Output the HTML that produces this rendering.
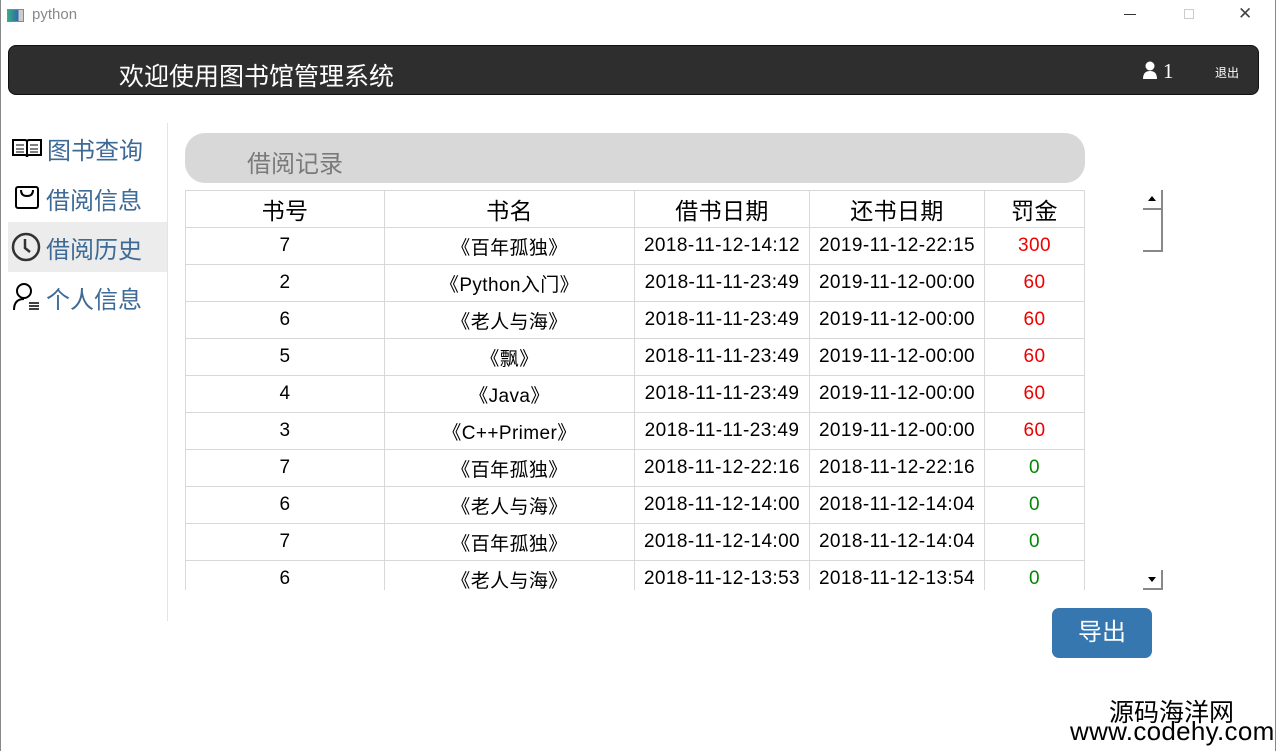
<!DOCTYPE html><html><head><meta charset="utf-8"><style>
*{margin:0;padding:0;box-sizing:border-box}
body{width:1276px;height:751px;background:#fff;position:relative;overflow:hidden;font-family:"Liberation Sans","Noto Sans CJK SC",sans-serif}
.a{position:absolute}
.hdr{left:8px;top:45px;width:1251px;height:50px;background:#2e2e2e;border-radius:8px;border:1px solid #111}
.nav{left:11px;font-size:24px;color:#3d6a96;display:flex;align-items:center;gap:4px;height:50px}
table{border-collapse:collapse;font-size:19px;letter-spacing:0.4px;color:#000;table-layout:fixed}
td,th{border:1px solid #d8d8d8;text-align:center;height:37px;font-weight:normal}
th{font-size:23px}
.r{color:#e00}.g{color:#080}
</style></head><body>
<div class="a" style="left:0;top:0;width:1px;height:751px;background:#888"></div>
<div class="a" style="right:0;top:0;width:1px;height:751px;background:#888"></div>
<div class="a" style="left:7px;top:9px;width:17px;height:13px;border:1px solid #888;background:linear-gradient(90deg,#3a8 0,#36a 70%,#ccc 70%)"></div>
<div class="a" style="left:32px;top:6px;font-size:15px;color:#888">python</div>
<div class="a" style="left:1124px;top:14px;width:12px;height:1px;background:#333"></div>
<div class="a" style="left:1184px;top:9px;width:10px;height:10px;border:1px solid #ccc"></div>
<div class="a" style="left:1238px;top:4px;font-size:17px;color:#444">✕</div>
<div class="a hdr"></div>
<div class="a" style="left:119px;top:57px;font-size:25px;color:#fff">欢迎使用图书馆管理系统</div>
<svg class="a" style="left:1142px;top:61px" width="16" height="18"><circle cx="8" cy="5" r="4.5" fill="#fff"/><path d="M1 18 Q1 10 8 10 Q15 10 15 18Z" fill="#fff"/></svg>
<div class="a" style="left:1163px;top:59px;font-size:21px;color:#fff;font-family:'Liberation Serif',serif">1</div>
<div class="a" style="left:1215px;top:64px;font-size:12px;color:#fff">退出</div>
<div class="a" style="left:167px;top:123px;width:1px;height:498px;background:#e4e4e4"></div>
<div class="a" style="left:8px;top:222px;width:159px;height:50px;background:#ececec"></div>
<div class="a nav" style="top:123px"><svg width="32" height="22"><path d="M2 3h12q2 0 2 2v15q0-2-2-2H2z M30 3H18q-2 0-2 2v15q0-2 2-2h12z" fill="none" stroke="#000" stroke-width="2"/><path d="M5 8h8M5 12h8M5 15h8M19 8h8M19 12h8M19 15h8" stroke="#000"/></svg>图书查询</div>
<div class="a nav" style="top:173px;left:14px"><svg width="28" height="26"><rect x="2" y="2" width="22" height="21" rx="2" fill="none" stroke="#000" stroke-width="2"/><path d="M7 5q0 6 6 6q6 0 6-6" fill="none" stroke="#000" stroke-width="2"/></svg>借阅信息</div>
<div class="a nav" style="top:222px;left:10px"><svg width="32" height="32"><circle cx="16" cy="16" r="13" fill="none" stroke="#333" stroke-width="2.5"/><path d="M15 8v9l5 4" fill="none" stroke="#333" stroke-width="2.5"/></svg>借阅历史</div>
<div class="a nav" style="top:272px;left:12px"><svg width="30" height="30"><circle cx="12" cy="9" r="7" fill="none" stroke="#000" stroke-width="2"/><path d="M2 28q0-11 10-11" fill="none" stroke="#000" stroke-width="2"/><path d="M17 21h10M17 24h10M17 27h10" stroke="#000" stroke-width="1.6"/></svg>个人信息</div>
<div class="a" style="left:185px;top:133px;width:900px;height:50px;background:#d8d8d8;border-radius:20px"></div>
<div class="a" style="left:247px;top:144px;font-size:24px;color:#7a7a7a">借阅记录</div>
<div class="a" style="left:185px;top:190px;width:901px;height:400px;overflow:hidden">
<table style="width:900px"><colgroup><col style="width:199px"><col style="width:250px"><col style="width:175px"><col style="width:175px"><col style="width:100px"></colgroup>
<tr><th>书号</th><th>书名</th><th>借书日期</th><th>还书日期</th><th>罚金</th></tr>
<tr><td>7</td><td>《百年孤独》</td><td>2018-11-12-14:12</td><td>2019-11-12-22:15</td><td class="r">300</td></tr>
<tr><td>2</td><td>《Python入门》</td><td>2018-11-11-23:49</td><td>2019-11-12-00:00</td><td class="r">60</td></tr>
<tr><td>6</td><td>《老人与海》</td><td>2018-11-11-23:49</td><td>2019-11-12-00:00</td><td class="r">60</td></tr>
<tr><td>5</td><td>《飘》</td><td>2018-11-11-23:49</td><td>2019-11-12-00:00</td><td class="r">60</td></tr>
<tr><td>4</td><td>《Java》</td><td>2018-11-11-23:49</td><td>2019-11-12-00:00</td><td class="r">60</td></tr>
<tr><td>3</td><td>《C++Primer》</td><td>2018-11-11-23:49</td><td>2019-11-12-00:00</td><td class="r">60</td></tr>
<tr><td>7</td><td>《百年孤独》</td><td>2018-11-12-22:16</td><td>2018-11-12-22:16</td><td class="g">0</td></tr>
<tr><td>6</td><td>《老人与海》</td><td>2018-11-12-14:00</td><td>2018-11-12-14:04</td><td class="g">0</td></tr>
<tr><td>7</td><td>《百年孤独》</td><td>2018-11-12-14:00</td><td>2018-11-12-14:04</td><td class="g">0</td></tr>
<tr><td>6</td><td>《老人与海》</td><td>2018-11-12-13:53</td><td>2018-11-12-13:54</td><td class="g">0</td></tr>
</table></div>
<div class="a" style="left:1143px;top:190px;width:20px;height:20px;border-right:2px solid #888;border-bottom:2px solid #888"></div>
<div class="a" style="left:1148px;top:196px;width:0;height:0;border:4px solid transparent;border-bottom:5px solid #000;border-top:0"></div>
<div class="a" style="left:1143px;top:210px;width:20px;height:42px;border-right:2px solid #888;border-bottom:2px solid #888"></div>
<div class="a" style="left:1143px;top:570px;width:20px;height:20px;border-right:2px solid #888;border-bottom:2px solid #888"></div>
<div class="a" style="left:1148px;top:577px;width:0;height:0;border:4px solid transparent;border-top:5px solid #000;border-bottom:0"></div>
<div class="a" style="left:1052px;top:608px;width:100px;height:50px;background:#3777b0;border-radius:7px;color:#fff;font-size:24px;text-align:center;line-height:50px">导出</div>
<div class="a" style="left:1109px;top:693px;font-size:25px;color:#000">源码海洋网</div>
<div class="a" style="left:1070px;top:716px;font-size:26px;color:#000;letter-spacing:0.3px">www.codehy.com</div>
</body></html>
